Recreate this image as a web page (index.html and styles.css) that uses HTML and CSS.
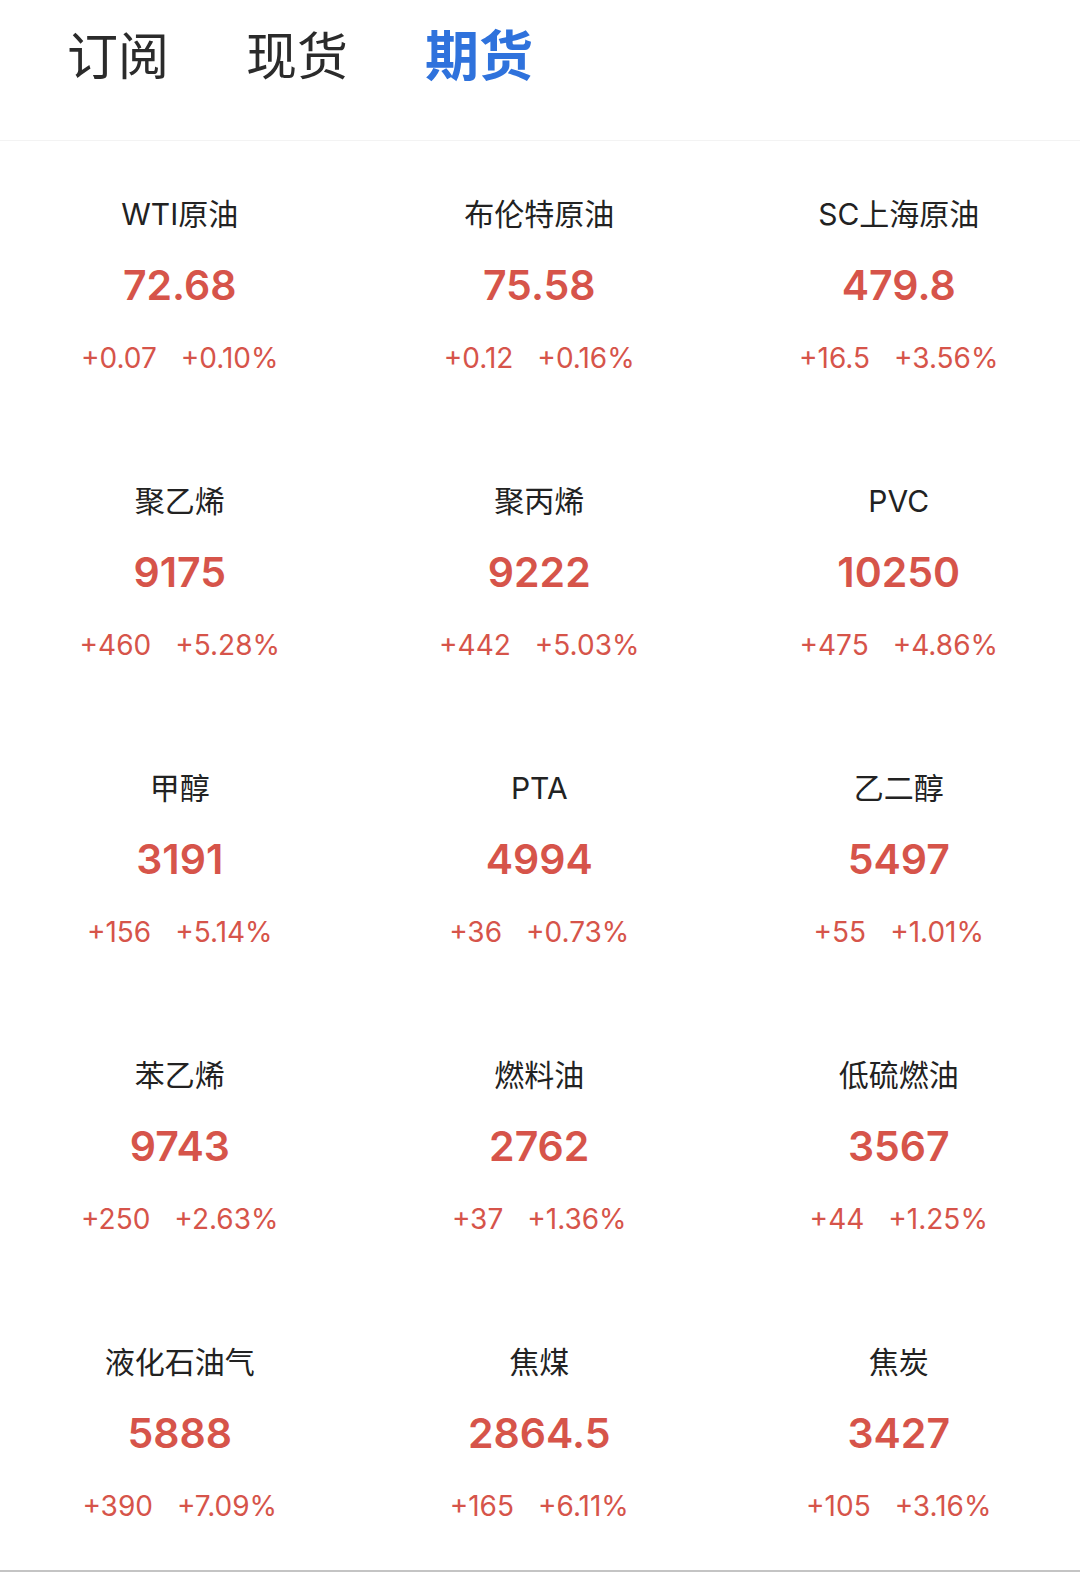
FILE: index.html
```html
<!DOCTYPE html>
<html lang="zh-CN">
<head>
<meta charset="utf-8">
<title>期货</title>
<link rel="stylesheet" href="styles.css">
</head>
<body>
<div class="page">
  <header class="tabs">
    <span class="tab">订阅</span>
    <span class="tab">现货</span>
    <span class="tab active">期货</span>
  </header>
  <main class="grid">
    <div class="cell"><div class="name">WTI原油</div><div class="price">72.68</div><div class="chg"><span>+0.07</span><span>+0.10%</span></div></div>
    <div class="cell"><div class="name">布伦特原油</div><div class="price">75.58</div><div class="chg"><span>+0.12</span><span>+0.16%</span></div></div>
    <div class="cell"><div class="name">SC上海原油</div><div class="price">479.8</div><div class="chg"><span>+16.5</span><span>+3.56%</span></div></div>

    <div class="cell"><div class="name">聚乙烯</div><div class="price">9175</div><div class="chg"><span>+460</span><span>+5.28%</span></div></div>
    <div class="cell"><div class="name">聚丙烯</div><div class="price">9222</div><div class="chg"><span>+442</span><span>+5.03%</span></div></div>
    <div class="cell"><div class="name">PVC</div><div class="price">10250</div><div class="chg"><span>+475</span><span>+4.86%</span></div></div>

    <div class="cell"><div class="name">甲醇</div><div class="price">3191</div><div class="chg"><span>+156</span><span>+5.14%</span></div></div>
    <div class="cell"><div class="name">PTA</div><div class="price">4994</div><div class="chg"><span>+36</span><span>+0.73%</span></div></div>
    <div class="cell"><div class="name">乙二醇</div><div class="price">5497</div><div class="chg"><span>+55</span><span>+1.01%</span></div></div>

    <div class="cell"><div class="name">苯乙烯</div><div class="price">9743</div><div class="chg"><span>+250</span><span>+2.63%</span></div></div>
    <div class="cell"><div class="name">燃料油</div><div class="price">2762</div><div class="chg"><span>+37</span><span>+1.36%</span></div></div>
    <div class="cell"><div class="name">低硫燃油</div><div class="price">3567</div><div class="chg"><span>+44</span><span>+1.25%</span></div></div>

    <div class="cell"><div class="name">液化石油气</div><div class="price">5888</div><div class="chg"><span>+390</span><span>+7.09%</span></div></div>
    <div class="cell"><div class="name">焦煤</div><div class="price">2864.5</div><div class="chg"><span>+165</span><span>+6.11%</span></div></div>
    <div class="cell"><div class="name">焦炭</div><div class="price">3427</div><div class="chg"><span>+105</span><span>+3.16%</span></div></div>
  </main>
</div>
</body>
</html>
```

FILE: styles.css
```css
* { box-sizing: border-box; }
html, body { margin: 0; padding: 0; background: #fff; }
body {
  font-family: Inter, "Noto Sans CJK SC", sans-serif;
}
.page {
  width: 1080px;
  height: 1572px;
  overflow: hidden;
  border-bottom: 2px solid #c4c4c4;
  display: flex;
  flex-direction: column;
}
.tabs {
  height: 141px;
  flex: none;
  display: flex;
  align-items: center;
  gap: 77px;
  padding-left: 67px;
  padding-bottom: 34px;
  border-bottom: 1px solid #f3f3f3;
}
.tab {
  font-family: "Noto Sans CJK SC", sans-serif;
  font-size: 51px;
  line-height: 60px;
  color: #2b2b2b;
  font-weight: 400;
}
.tab.active {
  color: #2f72dc;
  font-weight: 700;
  font-size: 54px;
}
.grid {
  display: grid;
  grid-template-columns: repeat(3, 359.5px);
  grid-auto-rows: 287px;
}
.cell {
  display: flex;
  flex-direction: column;
  align-items: center;
  padding-top: 53px;
}
.name {
  font-size: 30px;
  line-height: 40px;
  color: #222;
  font-family: Inter, "Noto Sans CJK SC", sans-serif;
}
.price {
  margin-top: 21px;
  font-size: 41px;
  line-height: 60px;
  font-weight: 600;
  color: #d6544a;
}
.chg {
  margin-top: 23px;
  font-size: 28px;
  line-height: 40px;
  color: #d6544a;
  display: flex;
  gap: 24px;
}
```
